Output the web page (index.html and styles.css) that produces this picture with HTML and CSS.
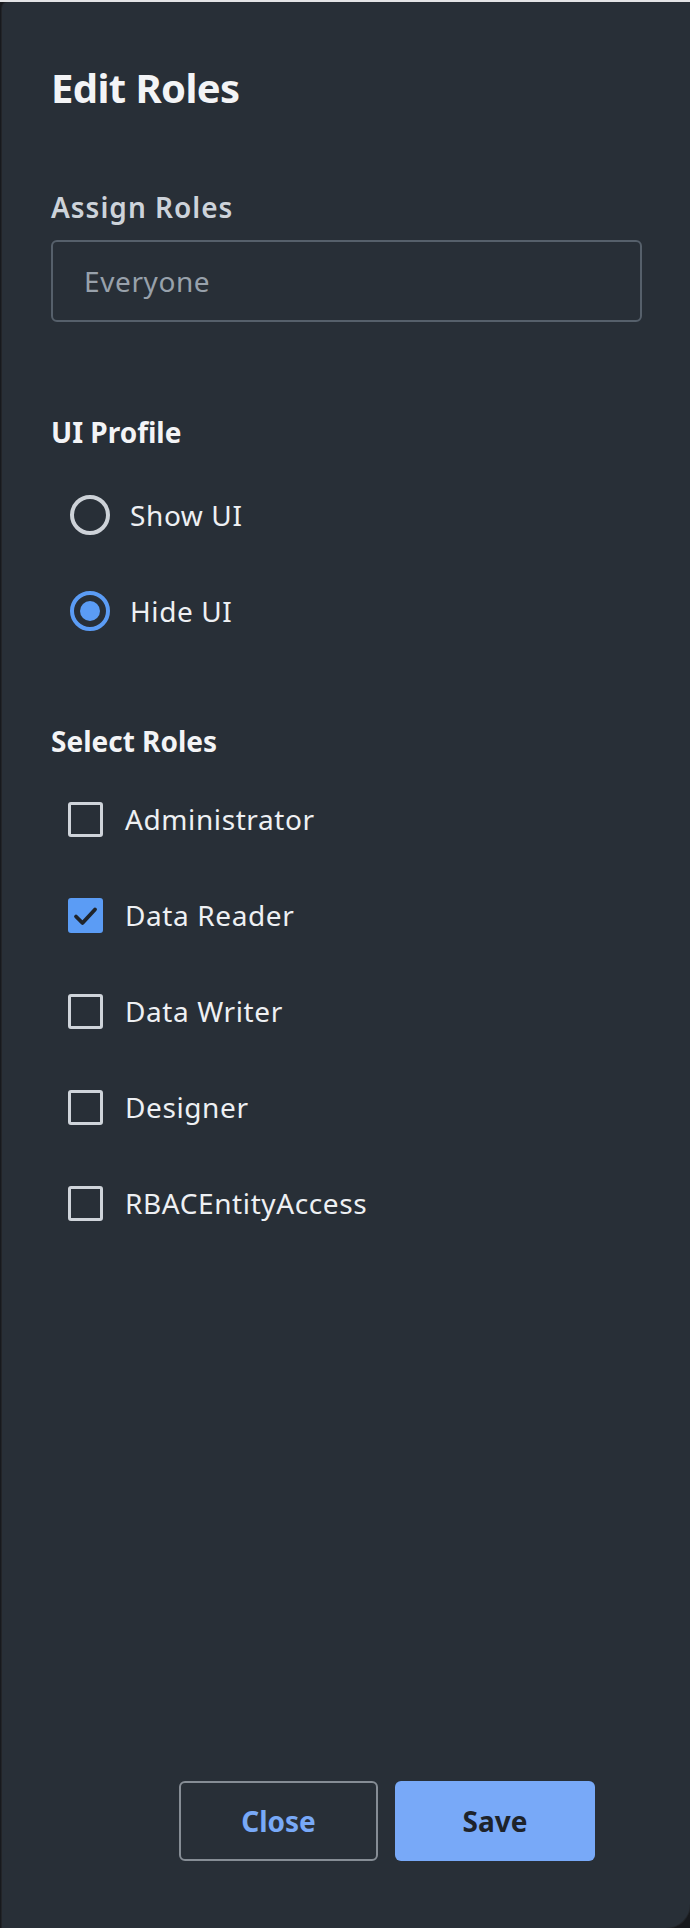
FILE: index.html
```html
<!DOCTYPE html>
<html lang="en">
<head>
  <meta charset="UTF-8">
  <title>Edit Roles</title>
  <link rel="stylesheet" href="styles.css">
</head>
<body>

<div class="drawer">
  <h1 class="drawer-title">Edit Roles</h1>

  <!-- assign roles -->
  <div class="field">
    <label class="field-label">Assign Roles</label>
    <div class="field-input">Everyone</div>
  </div>

  <!-- ui profile -->
  <div class="group">
    <h2 class="group-title">UI Profile</h2>
    <div class="radio-list">
      <div class="radio-row">
        <span class="radio"></span>
        <span class="row-text">Show UI</span>
      </div>
      <div class="radio-row">
        <span class="radio checked"></span>
        <span class="row-text">Hide UI</span>
      </div>
    </div>
  </div>

  <!-- select roles -->
  <div class="group">
    <h2 class="group-title">Select Roles</h2>
    <div class="check-list">
      <div class="check-row">
        <span class="check"></span>
        <span class="row-text">Administrator</span>
      </div>
      <div class="check-row">
        <span class="check checked">
          <svg width="35" height="35" viewBox="0 0 35 35"><polyline points="8,18.5 14.5,25 27,11.5" fill="none" stroke="#1f242b" stroke-width="3.8" stroke-linecap="round" stroke-linejoin="round"/></svg>
        </span>
        <span class="row-text">Data Reader</span>
      </div>
      <div class="check-row">
        <span class="check"></span>
        <span class="row-text">Data Writer</span>
      </div>
      <div class="check-row">
        <span class="check"></span>
        <span class="row-text">Designer</span>
      </div>
      <div class="check-row">
        <span class="check"></span>
        <span class="row-text">RBACEntityAccess</span>
      </div>
    </div>
  </div>

  <div class="drawer-footer">
    <button class="btn btn-outline">Close</button>
    <button class="btn btn-primary">Save</button>
  </div>
</div>

</body>
</html>
```

FILE: styles.css
```css
/* === page behind the drawer === */
html, body {
  margin: 0;
  height: 100%;
}

body {
  background: #17191d;
  border-top: 2px solid #e3e4e6;
  box-sizing: border-box;
  padding-left: 2px;
  font-family: "Noto Sans", "Open Sans", sans-serif;
  color: #eef0f3;
}

/* === drawer panel === */
.drawer {
  height: 1926px;
  box-sizing: border-box;
  display: flex;
  flex-direction: column;
  padding: 62px 48px 67px 49px;
  background: #282f37;
  border-radius: 6px 0 24px 0;
  box-shadow: 0 0 0 1px rgba(255, 255, 255, 0.05);
}

.drawer-title {
  margin: 0;
  font-size: 40px;
  line-height: 48px;
  font-weight: 700;
  letter-spacing: -0.6px;
  color: #f3f4f6;
}

/* === assign roles === */
.field {
  margin-top: 77px;
}

.field-label {
  display: block;
  font-size: 28px;
  line-height: 36px;
  font-weight: 600;
  letter-spacing: 1px;
  color: #cdd3da;
}

.field-input {
  margin-top: 15px;
  height: 82px;
  box-sizing: border-box;
  display: flex;
  align-items: center;
  padding-left: 31px;
  border: 2px solid #56606b;
  border-radius: 6px;
  font-size: 28px;
  line-height: 36px;
  letter-spacing: 0.6px;
  color: #98a1ab;
}

/* === groups (radio / checkbox) === */
.group {
  margin-top: 92px;
}

.group-title {
  margin: 0;
  font-size: 28px;
  line-height: 36px;
  font-weight: 700;
  color: #f3f4f6;
}

.radio-list,
.check-list {
  display: flex;
  flex-direction: column;
  gap: 56px;
}

.radio-list {
  margin-top: 45px;
}

.check-list {
  margin-top: 40px;
}

.radio-row,
.check-row {
  display: flex;
  align-items: center;
  height: 40px;
}

.row-text {
  font-size: 28px;
  line-height: 36px;
  letter-spacing: 0.6px;
  color: #eef0f3;
}

/* radio */
.radio {
  width: 40px;
  height: 40px;
  box-sizing: border-box;
  margin: 0 20px 0 19px;
  border: 4px solid #cdd2d8;
  border-radius: 50%;
  display: flex;
  align-items: center;
  justify-content: center;
}

.radio.checked {
  border-color: #5b9cf5;
}

.radio.checked::after {
  content: "";
  width: 20px;
  height: 20px;
  border-radius: 50%;
  background: #5b9cf5;
}

/* checkbox */
.check {
  width: 35px;
  height: 35px;
  box-sizing: border-box;
  margin: 0 22px 0 17px;
  border: 3.5px solid #cfd4da;
  border-radius: 3px;
}

.check.checked {
  border: none;
  background: #5b9cf5;
}

.check svg {
  display: block;
}

/* === footer buttons === */
.drawer-footer {
  margin-top: auto;
  display: flex;
  justify-content: flex-end;
  gap: 17px;
  padding-right: 47px;
}

.btn {
  width: 199px;
  height: 80px;
  box-sizing: border-box;
  border-radius: 6px;
  font-family: "Noto Sans", "Open Sans", sans-serif;
  font-size: 28px;
  font-weight: 700;
  cursor: pointer;
}

.btn-outline {
  background: transparent;
  border: 2px solid #868d95;
  color: #78a9f7;
}

.btn-primary {
  width: 200px;
  background: #78a9f8;
  border: none;
  color: #1e232a;
}
```
